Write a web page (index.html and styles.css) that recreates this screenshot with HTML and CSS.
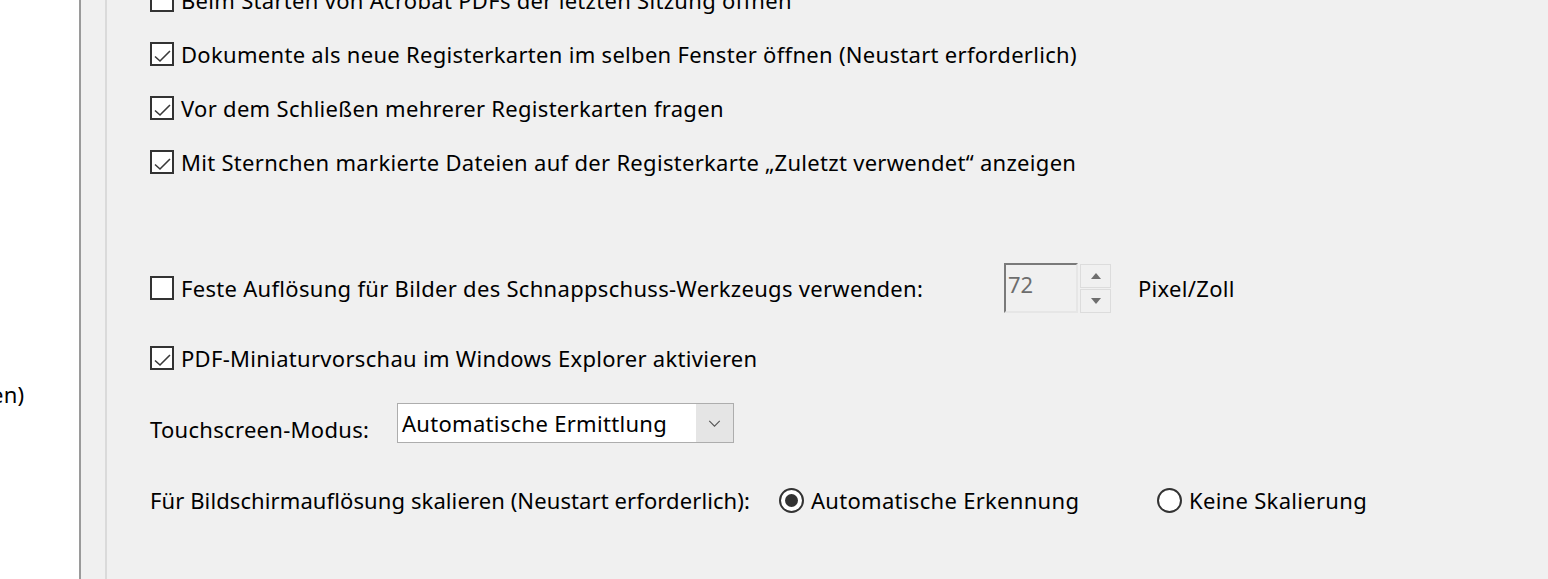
FILE: index.html
```html
<!DOCTYPE html>
<html lang="de">
<head>
<meta charset="utf-8">
<title>Einstellungen</title>
<link rel="stylesheet" href="styles.css">
</head>
<body>
<div class="window">
  <aside class="sidebar">
    <div class="sidebar-item">en)</div>
  </aside>
  <div class="gutter"></div>
  <main class="panel">
    <div class="row first">
      <span class="checkbox"></span>
      <span class="label">Beim Starten von Acrobat PDFs der letzten Sitzung öffnen</span>
    </div>
    <div class="row">
      <span class="checkbox checked"><svg viewBox="0 0 20 20"><polyline points="3,12.5 8,17 18,7"/></svg></span>
      <span class="label">Dokumente als neue Registerkarten im selben Fenster öffnen (Neustart erforderlich)</span>
    </div>
    <div class="row">
      <span class="checkbox checked"><svg viewBox="0 0 20 20"><polyline points="3,12.5 8,17 18,7"/></svg></span>
      <span class="label">Vor dem Schließen mehrerer Registerkarten fragen</span>
    </div>
    <div class="row">
      <span class="checkbox checked"><svg viewBox="0 0 20 20"><polyline points="3,12.5 8,17 18,7"/></svg></span>
      <span class="label">Mit Sternchen markierte Dateien auf der Registerkarte „Zuletzt verwendet“ anzeigen</span>
    </div>

    <div class="row snap">
      <div class="snap-label">
        <span class="checkbox"></span>
        <span class="label">Feste Auflösung für Bilder des Schnappschuss-Werkzeugs verwenden:</span>
      </div>
      <div class="spinner">
        <div class="spin-input">72</div>
        <div class="spin-buttons">
          <div class="spin-btn"><span class="tri up"></span></div>
          <div class="spin-btn"><span class="tri down"></span></div>
        </div>
      </div>
      <span class="unit">Pixel/Zoll</span>
    </div>

    <div class="row pdf">
      <span class="checkbox checked"><svg viewBox="0 0 20 20"><polyline points="3,12.5 8,17 18,7"/></svg></span>
      <span class="label">PDF-Miniaturvorschau im Windows Explorer aktivieren</span>
    </div>

    <div class="touch-row">
      <span class="touch-label">Touchscreen-Modus:</span>
      <div class="select">
        <span class="select-value">Automatische Ermittlung</span>
        <span class="select-arrow"><svg viewBox="0 0 14 8"><polyline points="1,1 7,7 13,1"/></svg></span>
      </div>
    </div>

    <div class="row scale">
      <span class="scale-label">Für Bildschirmauflösung skalieren (Neustart erforderlich):</span>
      <div class="radio-opt first-opt">
        <span class="radio selected"></span>
        <span class="label">Automatische Erkennung</span>
      </div>
      <div class="radio-opt">
        <span class="radio"></span>
        <span class="label">Keine Skalierung</span>
      </div>
    </div>
  </main>
</div>
</body>
</html>
```

FILE: styles.css
```css
html, body {
  margin: 0;
  padding: 0;
  background: #f0f0f0;
}
body {
  width: 1548px;
  height: 579px;
  overflow: hidden;
  font-family: "Noto Sans", "Open Sans", "DejaVu Sans", sans-serif;
  font-size: 22px;
  letter-spacing: 0.3px;
  color: #000;
}
.window {
  display: flex;
  height: 579px;
}
.sidebar {
  width: 79px;
  flex: none;
  background: #ffffff;
  border-right: 2px solid #9a9a9a;
  overflow: hidden;
}
.sidebar-item {
  padding-top: 379px;
  line-height: 30px;
  white-space: nowrap;
  margin-left: -9px;
}
.gutter {
  width: 24px;
  flex: none;
  background: #f0f0f0;
  border-right: 2px solid #dadada;
}
.panel {
  flex: 1;
  padding-left: 43px;
  margin-top: -27px;
}
.row {
  display: flex;
  align-items: center;
  height: 54px;
  white-space: nowrap;
}
.checkbox {
  width: 20px;
  height: 20px;
  border: 2px solid #333333;
  background: #ffffff;
  flex: none;
  display: flex;
  margin-right: 7px;
}
.checkbox svg {
  width: 20px;
  height: 20px;
}
.checkbox polyline {
  fill: none;
  stroke: #3a3a3a;
  stroke-width: 1.6;
}
.label {
  line-height: 28px;
}
.snap {
  margin-top: 72px;
}
.snap-label {
  width: 854px;
  display: flex;
  align-items: center;
}
.spinner {
  display: flex;
  gap: 2px;
  height: 50px;
}
.spin-input {
  width: 68px;
  height: 46px;
  border-top: 2px solid #7a7a7a;
  border-left: 2px solid #7a7a7a;
  border-right: 2px solid #e6e6e6;
  border-bottom: 2px solid #e6e6e6;
  background: #f0f0f0;
  color: #6d6d6d;
  padding-left: 2px;
  line-height: 38px;
  letter-spacing: 0;
}
.spin-buttons {
  display: flex;
  flex-direction: column;
  gap: 1px;
  padding-top: 1px;
}
.spin-btn {
  width: 29px;
  height: 22px;
  border: 1px solid #dcdcdc;
  background: #f0f0f0;
  display: flex;
  align-items: center;
  justify-content: center;
}
.tri {
  width: 0;
  height: 0;
  border-left: 5px solid transparent;
  border-right: 5px solid transparent;
}
.tri.up {
  border-bottom: 6px solid #6e6e6e;
}
.tri.down {
  border-top: 6px solid #6e6e6e;
}
.unit {
  margin-left: 27px;
  line-height: 28px;
}
.pdf {
  margin-top: 16px;
}
.touch-row {
  display: flex;
  margin-top: 18px;
  height: 40px;
  white-space: nowrap;
}
.touch-label {
  width: 247px;
  padding-top: 12px;
  line-height: 28px;
}
.select {
  width: 335px;
  height: 38px;
  border: 1px solid #adadad;
  display: flex;
}
.select-value {
  width: 294px;
  background: #ffffff;
  padding-left: 4px;
  line-height: 38px;
}
.select-arrow {
  flex: 1;
  background: #e5e5e5;
  display: flex;
  align-items: center;
  justify-content: center;
}
.select-arrow svg {
  width: 13px;
  height: 7px;
}
.select-arrow polyline {
  fill: none;
  stroke: #555555;
  stroke-width: 1.3;
}
.scale {
  margin-top: 30px;
}
.scale-label {
  width: 629px;
  line-height: 28px;
  letter-spacing: 0.1px;
}
.radio-opt {
  display: flex;
  align-items: center;
}
.first-opt {
  width: 378px;
}
.radio {
  width: 21px;
  height: 21px;
  border: 2px solid #333333;
  border-radius: 50%;
  background: #ffffff;
  margin-right: 7px;
  display: flex;
  align-items: center;
  justify-content: center;
  flex: none;
}
.radio.selected::after {
  content: "";
  width: 13px;
  height: 13px;
  border-radius: 50%;
  background: #333333;
}
```
